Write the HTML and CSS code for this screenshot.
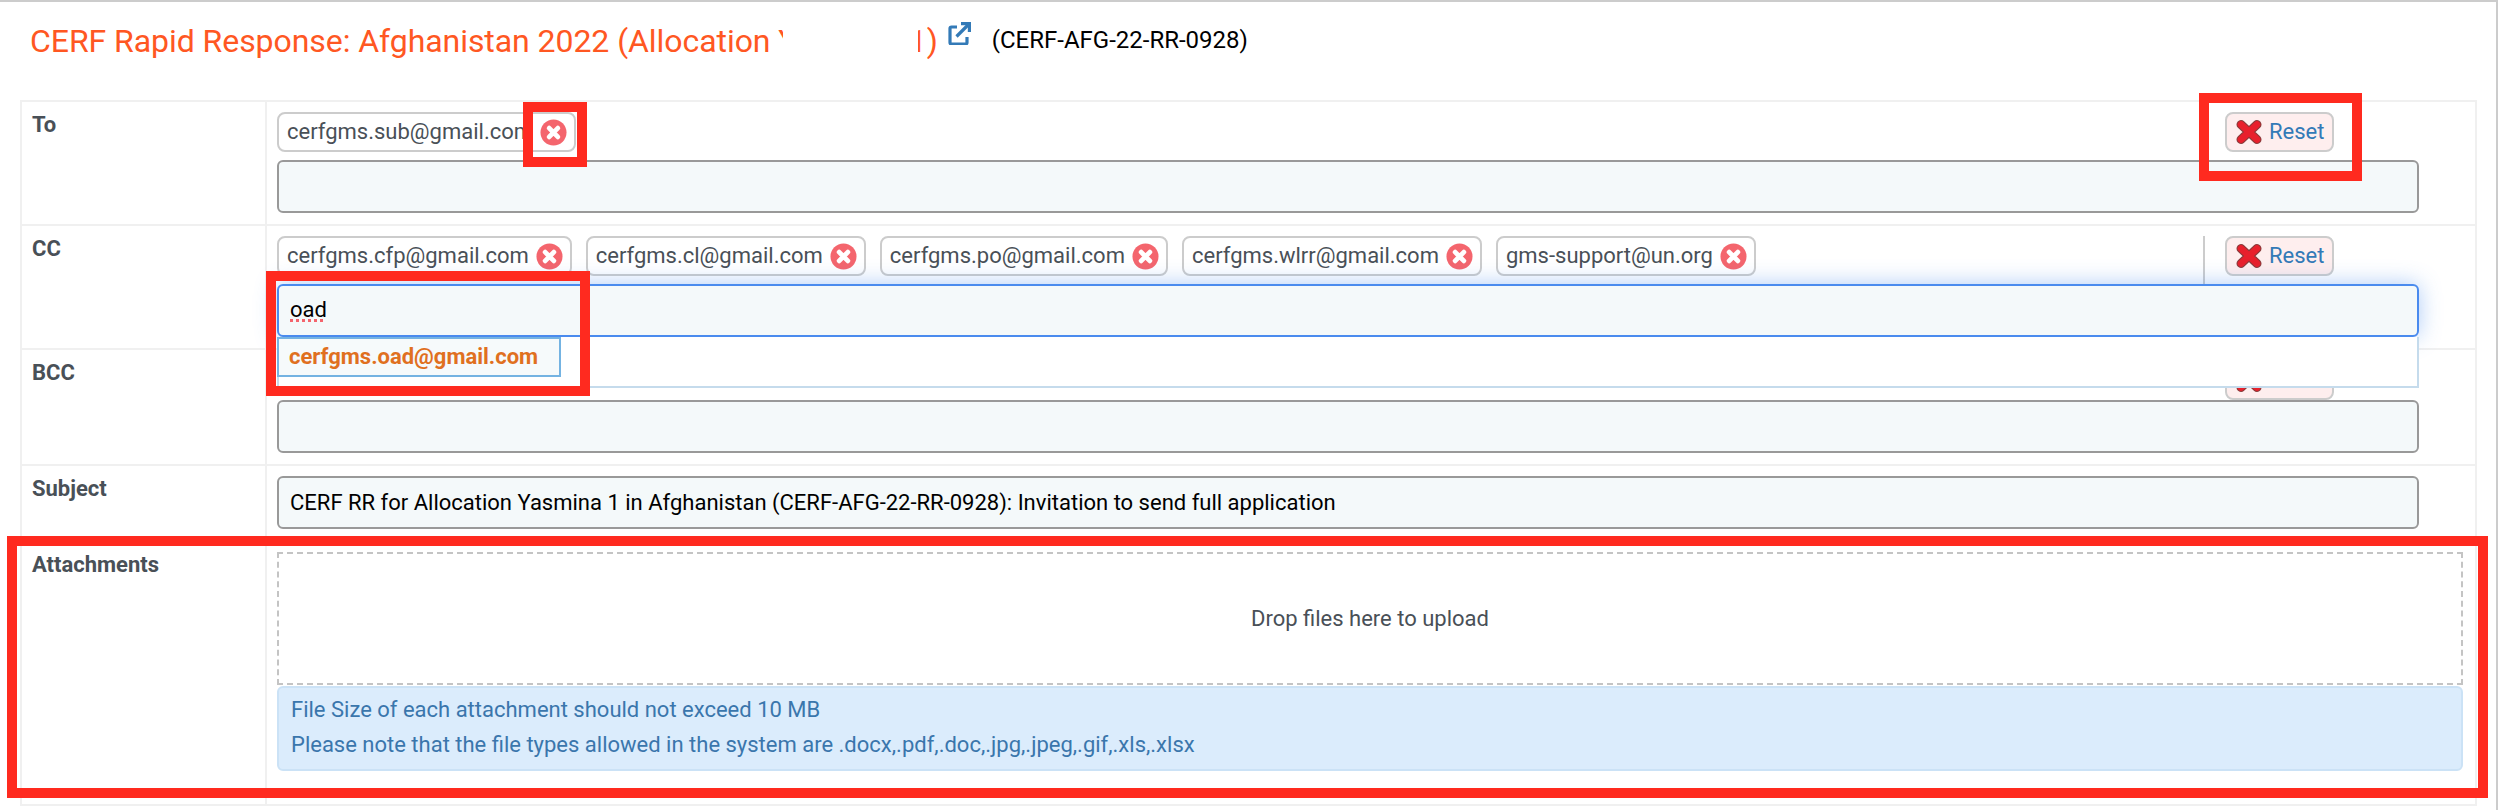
FILE: index.html
```html
<!DOCTYPE html>
<html lang="en">
<head>
  <meta charset="UTF-8">
  <title>Send invitation</title>
  <link rel="stylesheet" href="styles.css">
</head>
<body>
  <div class="page">
    <div class="header">
      <h1 class="title">CERF Rapid Response: Afghanistan 2022 (Allocation Yasmina 1)<span class="redact"></span></h1>
      <a class="ext-link" href="#">
        <svg viewBox="0 0 24 24" width="24" height="24"><path d="M10 6H4.500A1.500 1.500 0 0 0 3 7.500v14A1.500 1.500 0 0 0 4.500 23h14a1.500 1.500 0 0 0 1.500-1.500V16" fill="none" stroke="#337ab7" stroke-width="3.200"/><path d="M9.500 15.500 21 4" fill="none" stroke="#337ab7" stroke-width="3.200"/><path d="M14 2.600h8.400V11" fill="none" stroke="#337ab7" stroke-width="3.200"/></svg>
      </a>
      <span class="code">(CERF-AFG-22-RR-0928)</span>
    </div>

    <div class="mail-table">
      <div class="row">
        <div class="label">To</div>
        <div class="value">
          <div class="tag-line has-tags">
            <div class="tags">
              <span class="chip">cerfgms.sub@gmail.com<svg class="chip-x" viewBox="0 0 28 28"><use href="#x-circle"/></svg></span>
            </div>
            <button class="reset" type="button"><svg viewBox="0 0 26 24" width="26" height="24"><use href="#x-red"/></svg>Reset</button>
          </div>
          <input class="field" type="text">
        </div>
      </div>

      <div class="row">
        <div class="label">CC</div>
        <div class="value">
          <div class="tag-line has-tags">
            <div class="tags with-line">
              <span class="chip">cerfgms.cfp@gmail.com<svg class="chip-x" viewBox="0 0 28 28"><use href="#x-circle"/></svg></span>
              <span class="chip">cerfgms.cl@gmail.com<svg class="chip-x" viewBox="0 0 28 28"><use href="#x-circle"/></svg></span>
              <span class="chip">cerfgms.po@gmail.com<svg class="chip-x" viewBox="0 0 28 28"><use href="#x-circle"/></svg></span>
              <span class="chip">cerfgms.wlrr@gmail.com<svg class="chip-x" viewBox="0 0 28 28"><use href="#x-circle"/></svg></span>
              <span class="chip">gms-support@un.org<svg class="chip-x" viewBox="0 0 28 28"><use href="#x-circle"/></svg></span>
            </div>
            <button class="reset" type="button"><svg viewBox="0 0 26 24" width="26" height="24"><use href="#x-red"/></svg>Reset</button>
          </div>
          <div class="combo">
            <div class="field focused"><span class="typo">oad</span></div>
            <div class="dropdown">
              <div class="option">cerfgms.oad@gmail.com</div>
            </div>
          </div>
        </div>
      </div>

      <div class="row">
        <div class="label">BCC</div>
        <div class="value">
          <div class="tag-line">
            <div class="tags"></div>
            <button class="reset" type="button"><svg viewBox="0 0 26 24" width="26" height="24"><use href="#x-red"/></svg>Reset</button>
          </div>
          <input class="field" type="text">
        </div>
      </div>

      <div class="row">
        <div class="label">Subject</div>
        <div class="value">
          <input class="field" type="text" value="CERF RR for Allocation Yasmina 1 in Afghanistan (CERF-AFG-22-RR-0928): Invitation to send full application">
        </div>
      </div>

      <div class="row row-attach">
        <div class="label">Attachments</div>
        <div class="value">
          <div class="dropzone">Drop files here to upload</div>
          <div class="note">
            File Size of each attachment should not exceed 10 MB<br>
            Please note that the file types allowed in the system are .docx,.pdf,.doc,.jpg,.jpeg,.gif,.xls,.xlsx
          </div>
        </div>
      </div>
    </div>

    <!-- red annotation boxes drawn on the screenshot -->
    <div class="mark mark-chip"></div>
    <div class="mark mark-reset"></div>
    <div class="mark mark-input"></div>
    <div class="mark mark-attach"></div>
  </div>

  <svg class="defs" width="0" height="0">
    <symbol id="x-circle" viewBox="0 0 28 28">
      <circle cx="14" cy="14" r="13.500" fill="#f4656d"/>
      <path d="M9.500 9.500l9 9M18.500 9.500l-9 9" stroke="#fff" stroke-width="5" stroke-linecap="round"/>
    </symbol>
    <symbol id="x-red" viewBox="0 0 26 24">
      <path d="M5 4.500 21 19.500M21 4.500 5 19.500" stroke="#8a3a3a" stroke-width="9" stroke-linecap="round"/>
      <path d="M5 4.500 21 19.500M21 4.500 5 19.500" stroke="#e8202c" stroke-width="6.600" stroke-linecap="round"/>
    </symbol>
  </svg>
</body>
</html>
```

FILE: styles.css
```css
* {
  box-sizing: border-box;
}
html, body {
  margin: 0;
  background: #fff;
}
body {
  font-family: Roboto, "Liberation Sans", sans-serif;
  color: #495057;
}
.page {
  position: relative;
  width: 2498px;
  height: 810px;
  overflow: hidden;
  border-top: 2px solid #ccc;
  border-right: 2px solid #ccc;
}
.defs {
  position: absolute;
}

/* header */
.header {
  display: flex;
  align-items: flex-start;
  height: 98px;
  padding: 19px 0 0 30px;
}
.title {
  position: relative;
  margin: 0;
  font-size: 32px;
  font-weight: 400;
  line-height: 40px;
  letter-spacing: -0.06px;
  color: #ff5722;
}
.redact {
  position: absolute;
  left: 753px;
  top: 0;
  width: 135px;
  height: 44px;
  background: #fff;
}
.ext-link {
  display: block;
  margin: 0 0 0 9px;
  height: 24px;
}
.code {
  margin: 4px 0 0 21px;
  font-size: 24px;
  line-height: 30px;
  color: #000;
}

/* table */
.mail-table {
  margin-left: 20px;
  width: 2457px;
  border: 2px solid #f0f0f0;
}
.row {
  display: grid;
  grid-template-columns: 245px 1fr;
  border-bottom: 2px solid #f0f0f0;
}
.row:last-child {
  border-bottom: 0;
}
.label {
  padding: 8px 0 0 10px;
  font-size: 22px;
  font-weight: 700;
  line-height: 30px;
  border-right: 2px solid #f0f0f0;
}
.value {
  padding: 10px 0 11px 10px;
}
.row-attach .value {
  padding-bottom: 33px;
}

.tag-line {
  display: flex;
  align-items: flex-start;
  height: 40px;
}
.tag-line.has-tags {
  height: 48px;
}
.tags {
  display: flex;
  gap: 14px;
  width: 1928px;
  height: 40px;
  flex: none;
}
.tags.with-line {
  height: 48px;
  border-right: 2px solid #ccc;
}
.chip {
  display: flex;
  align-items: center;
  gap: 7px;
  height: 40px;
  padding: 0 7px 2px 8px;
  border: 2px solid #ccc;
  border-radius: 8px;
  background: #fff;
  font-size: 22px;
  white-space: nowrap;
}
.chip-x {
  width: 27px;
  height: 27px;
  margin-top: 2px;
  flex: none;
}
.reset {
  display: flex;
  align-items: center;
  gap: 7px;
  width: 109px;
  height: 40px;
  margin-left: 20px;
  padding: 0 0 2px 9px;
  border: 2px solid #ccc;
  border-radius: 8px;
  background: #feeeee;
  font-family: inherit;
  font-size: 22px;
  color: #337ab7;
}
.reset svg {
  margin-top: 2px;
}

.field {
  display: block;
  width: 2142px;
  height: 53px;
  padding: 0 11px;
  border: 2px solid #999;
  border-radius: 6px;
  background: #f4f9fa;
  font-family: inherit;
  font-size: 22px;
  line-height: 48px;
  color: #000;
}
.field.focused {
  position: relative;
  border-color: #4a8bee;
  box-shadow: 0 0 22px rgba(74, 139, 238, 0.45);
}
.typo {
  text-decoration: underline dotted #f4656d 3px;
  text-underline-offset: 2px;
}
.combo {
  position: relative;
  z-index: 2;
}
.dropdown {
  position: absolute;
  left: 0;
  top: 53px;
  width: 2142px;
  height: 51px;
  background: #fff;
  border-right: 2px solid #c5dbec;
  border-bottom: 2px solid #c5dbec;
  border-left: 2px solid #c5dbec;
}
.option {
  width: 284px;
  height: 40px;
  margin-left: -2px;
  padding-left: 10px;
  border: 2px solid #74b3e2;
  background: #f6fafb;
  font-size: 22px;
  font-weight: 700;
  line-height: 36px;
  color: #e0701f;
}

.dropzone {
  display: flex;
  align-items: center;
  justify-content: center;
  width: 2186px;
  height: 133px;
  border: 2px dashed #c4c4c4;
  font-size: 22px;
}
.note {
  width: 2186px;
  height: 85px;
  margin-top: 1px;
  padding: 4px 12px 0;
  border: 2px solid #cbe2f6;
  border-radius: 6px;
  background: #dbecfc;
  font-size: 22px;
  line-height: 35px;
  color: #3a76ac;
}

/* annotations */
.mark {
  position: absolute;
  z-index: 5;
  border: 10px solid #ff2a1f;
}
.mark-chip {
  left: 523px;
  top: 100px;
  width: 64px;
  height: 65px;
}
.mark-reset {
  left: 2199px;
  top: 91px;
  width: 163px;
  height: 88px;
}
.mark-input {
  left: 266px;
  top: 269px;
  width: 324px;
  height: 125px;
}
.mark-attach {
  left: 7px;
  top: 534px;
  width: 2481px;
  height: 262px;
}
```
